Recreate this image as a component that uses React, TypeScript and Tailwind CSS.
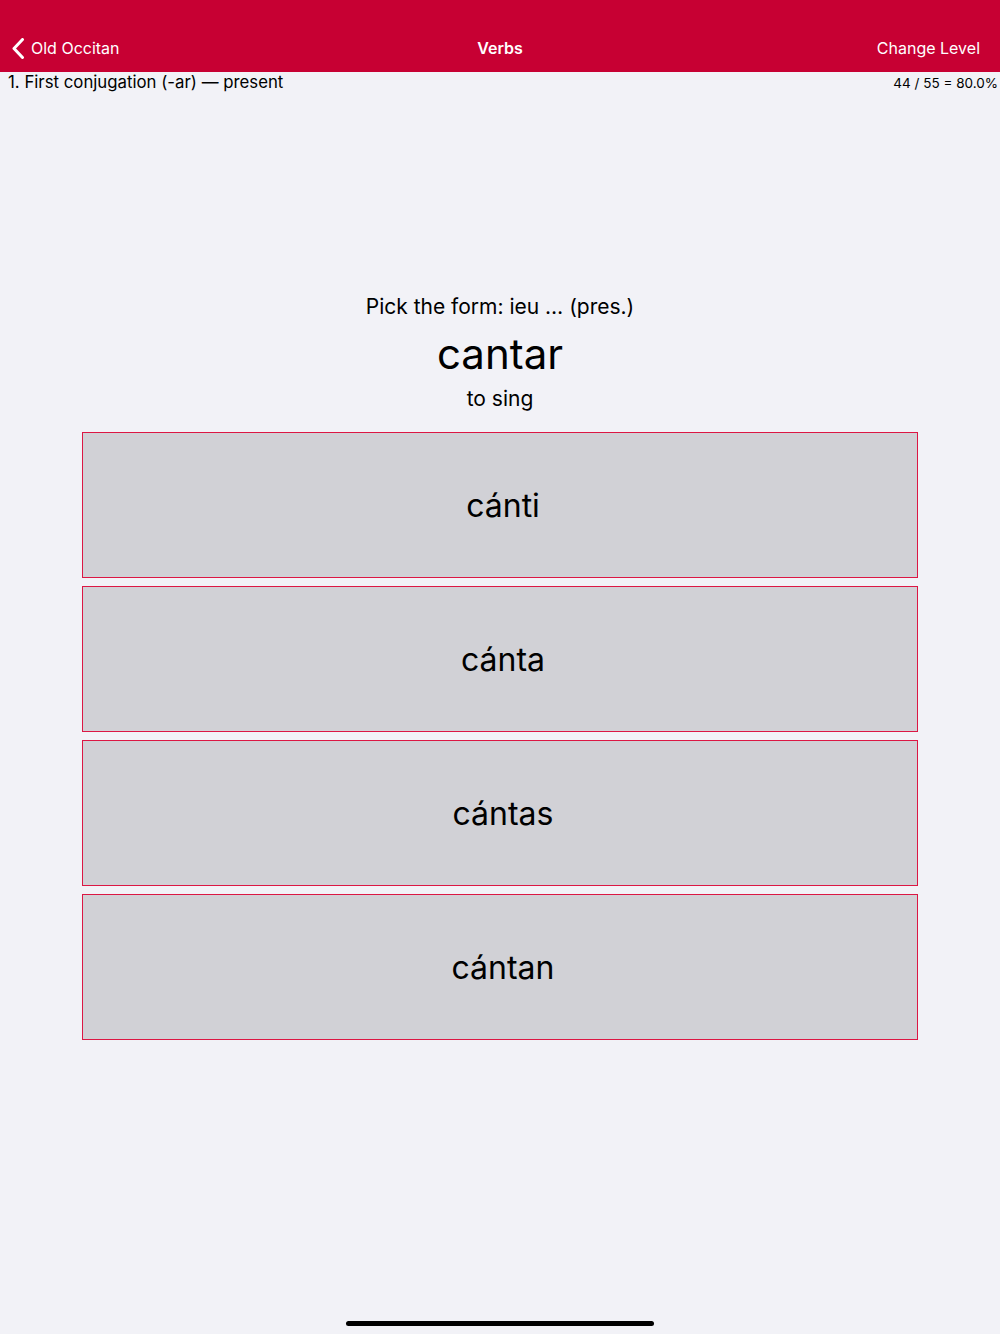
const OPTIONS = ['cánti', 'cánta', 'cántas', 'cántan']

export default function App() {
  return (
    <div className="relative w-[1000px] h-[1334px] bg-[#f2f2f7] font-['Inter','Liberation_Sans',sans-serif] text-black overflow-hidden">
      {/* Nav bar */}
      <div className="h-[72px] bg-[#c70033] pt-[24px]">
        <div className="relative h-[48px] flex items-center justify-between px-[12px] text-white text-[16px]">
          <div className="flex items-center gap-[6px]">
            <svg width="13" height="21" viewBox="0 0 13 21" fill="none">
              <path d="M10.5 1.5L2 10.5l8.5 9" stroke="white" strokeWidth="3" strokeLinecap="round" strokeLinejoin="round" />
            </svg>
            <span>Old Occitan</span>
          </div>
          <span className="absolute left-1/2 -translate-x-1/2 top-[12px] font-semibold">Verbs</span>
          <span className="pr-[8px]">Change Level</span>
        </div>
      </div>

      {/* Sub header */}
      <div className="h-[22px] flex items-center justify-between pl-[8px] pr-[2px]">
        <span className="text-[16.8px]">1. First conjugation (-ar) — present</span>
        <span className="text-[13.5px]">44 / 55 = 80.0%</span>
      </div>

      {/* Question */}
      <div className="mt-[199px] flex flex-col items-center">
        <p className="text-[21px] leading-[28px]">Pick the form: ieu … (pres.)</p>
        <p className="mt-[7px] text-[42px] leading-[52px]">cantar</p>
        <p className="mt-[5px] text-[21px] leading-[28px]">to sing</p>
      </div>

      {/* Options */}
      <div className="mt-[19px] mx-[82px] flex flex-col gap-[8px]">
        {OPTIONS.map((o) => (
          <button
            key={o}
            type="button"
            className="h-[146px] w-full bg-[#d1d1d6] border border-[#dc1744] flex items-center justify-center text-[32px] pl-[6px] pt-[2px]"
          >
            {o}
          </button>
        ))}
      </div>

      {/* Home indicator */}
      <div className="absolute left-[346px] top-[1321px] w-[308px] h-[5px] rounded-full bg-black" />
    </div>
  )
}
